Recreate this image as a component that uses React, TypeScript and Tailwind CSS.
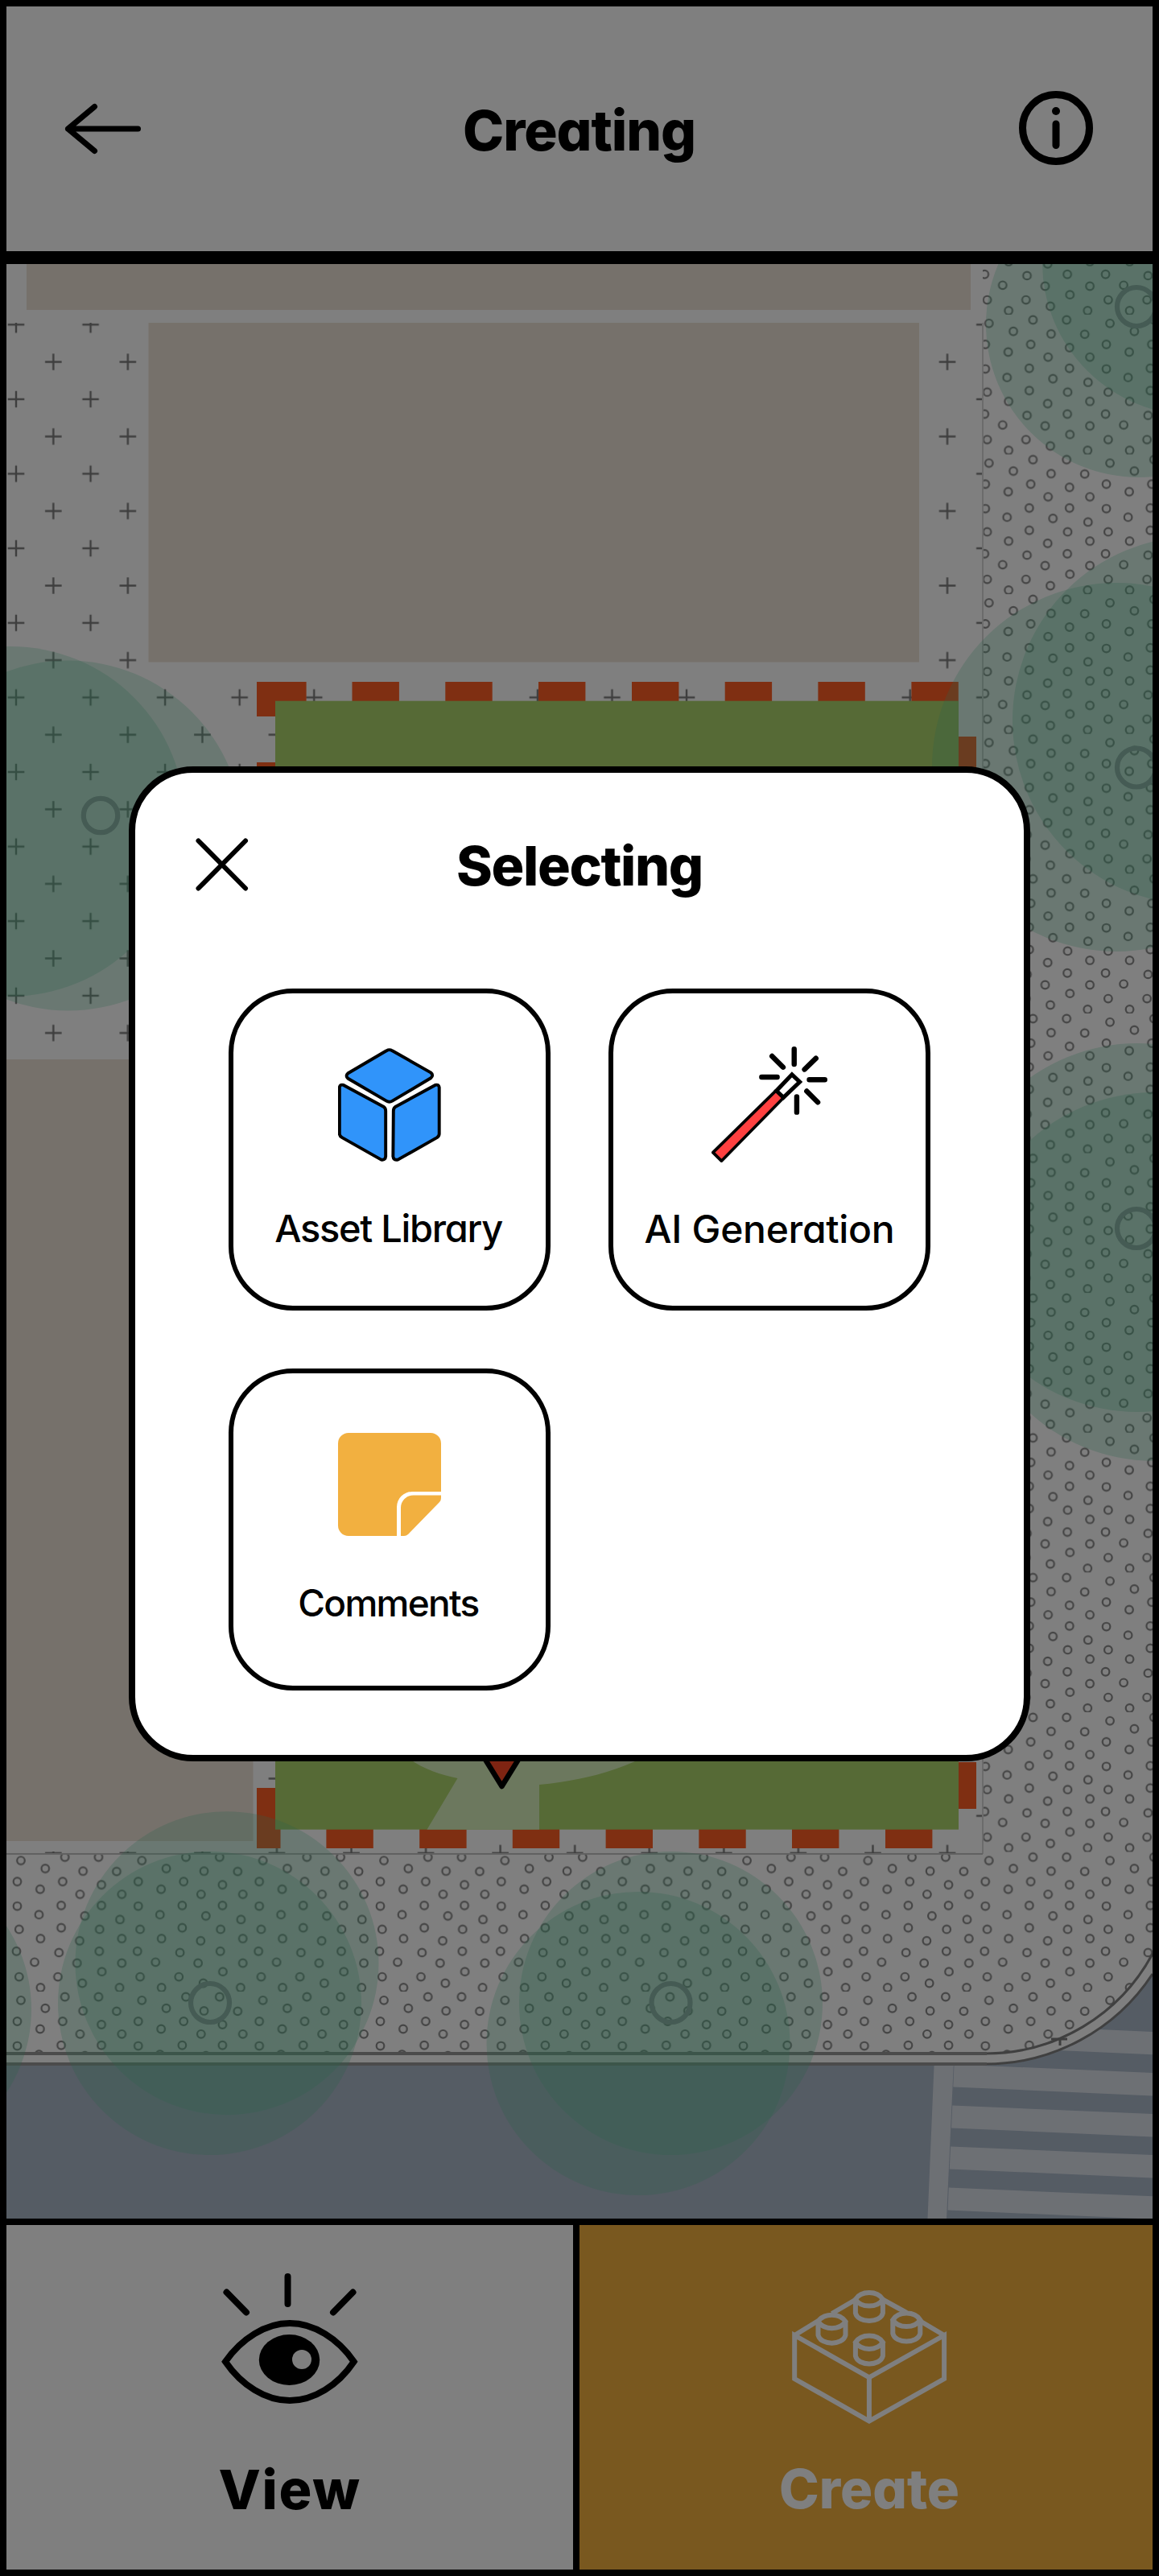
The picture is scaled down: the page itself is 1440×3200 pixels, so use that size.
import React from "react";

const PEBBLES: [number, number][] = [
  [68.7, 6.5], [110.5, 6.5], [14, 10.8], [44.3, 20.7], [91.2, 23.9], [133, 24.3],
  [9.5, 36.9], [65.9, 36.9], [114.1, 40.9], [37.9, 46.4], [87.5, 52.7], [139.4, 52.7],
  [9.5, 67.4], [64.1, 66.6], [114.1, 66.6], [36.5, 78], [93.5, 79.6], [137.1, 84],
  [11.8, 96.2], [64.1, 94.3], [111.8, 96.2], [38.4, 107.7], [139.4, 107.7], [87, 110.5],
  [8.5, 123.5], [61.3, 125.1], [111.4, 123.5], [31, 137], [83.8, 138.2], [139.4, 138.2],
  [11.8, 155.2], [60, 155.2], [114.6, 148.8], [90.3, 163.1], [38.4, 168.6], [136.6, 168.6],
];

const CANOPIES: [number, number, number][] = [
  [13, 1020.3, 217.3], [84.5, 1038, 217.5],
  [1415, 403, 190], [1485, 326, 190],
  [1387, 953, 229], [1487, 895, 229],
  [1413, 1525, 229], [1434, 1586, 229],
  [260.5, 2488.5, 188.5], [282, 2438.7, 188.5],
  [833.5, 2488.5, 188.5], [793, 2538.5, 188.5],
  [-149.5, 2496, 188.5],
];

const TRUNKS: [number, number, number][] = [
  [125, 1013, 21.2], [1412, 381, 24], [1412, 953.5, 24], [1412, 1526, 24], [261, 2488, 24], [833.5, 2488, 24],
];

const TOP_DASHES = [437.5, 553.3, 669, 785, 900.7, 1016.4, 1132.4];
const BOTTOM_DASHES = [405.4, 521.2, 636.8, 752.6, 868.3, 984, 1100];
const STRIPES = [2513.2, 2564.4, 2615.4, 2666.4, 2717.6];

const stripeLeft = (y: number) => 1185.5 - (y - 2565) * 0.044;

function SiteMap() {
  return (
    <svg className="block h-full w-full" viewBox="8 328 1424 2428" preserveAspectRatio="none" fill="none">
      <defs>
        <pattern id="plus" x="20" y="403.3" width="92.56" height="92.62" patternUnits="userSpaceOnUse">
          <path d="M36 46.3h20.6M46.3 36v20.6M0 0h10.3M0 0v10.3M82.3 0h10.3M92.56 0v10.3M0 92.62h10.3M0 82.3v10.3M82.3 92.62h10.3M92.56 82.3v10.3" stroke="#7d7d7d" strokeWidth="2.4" />
        </pattern>
        <pattern id="pebbles" x="463" y="2300.5" width="150.35" height="173.6" patternUnits="userSpaceOnUse">
          {PEBBLES.map(([x, y], i) => (
            <circle key={i} cx={x} cy={y} r="4.8" stroke="#888" strokeWidth="2.2" />
          ))}
        </pattern>
      </defs>

      <rect x="8" y="328" width="1424" height="2428" fill="#aab8c8" />
      <path d="M1160.8 2560H1185L1176 2756H1152.5Z" fill="#dbe0e9" />
      {STRIPES.map((y) => (
        <path key={y} d={`M${stripeLeft(y)} ${y}L1432 ${y + 10.7}V${y + 39}L${stripeLeft(y + 28)} ${y + 28}Z`} fill="#dbe0e9" />
      ))}

      <path d="M8 328H1432V2452A248 248 0 0 1 1225 2564H8Z" fill="#fff" />
      <path d="M1221 328H1432V2427A235 235 0 0 1 1225 2551H8V2303H1221Z" fill="url(#pebbles)" />
      <path d="M1432 2427A235 235 0 0 1 1225 2551M1432 2452A248 248 0 0 1 1225 2564" stroke="#808080" strokeWidth="3" />
      <path d="M8 2551H1226M8 2564H1226" stroke="#969696" strokeWidth="4" />
      <path d="M1306 2533H1326M1317 2534V2541" stroke="#7d7d7d" strokeWidth="3" />

      <rect x="8" y="401" width="1213" height="1902" fill="url(#plus)" />
      <path d="M1221 401V2303M8 2303H1221" stroke="#d6d6d6" strokeWidth="2" />
      <path d="M1221 2303H8" stroke="#bdbdbd" strokeWidth="1.5" />
      <path d="M184 388H1150V848H184ZM8 1300H318V2300H8Z" fill="#fff" />
      <path d="M33 328H1206V385H33ZM184.5 401H1142V822.5H184.5ZM8 1316H314.5V2287H8Z" fill="#ede3d7" />

      <path d="M319 847H380.6V890H319ZM319 2221H348.5V2296H319ZM1185 915H1213V973H1185ZM1185 2189H1213V2247H1185ZM319 947H345V1005H319Z" fill="#ff5e24" />
      {TOP_DASHES.map((x) => (
        <rect key={x} x={x} y="847" width="58.4" height="30" fill="#ff5e24" />
      ))}
      {BOTTOM_DASHES.map((x) => (
        <rect key={x} x={x} y="2266" width="58.4" height="30" fill="#ff5e24" />
      ))}
      <rect x="342" y="870.7" width="849" height="1402" fill="#acd46c" />
      <path d="M500 2178C520 2196 545 2204 568.5 2209L530.5 2272.7H670V2217C715 2213 755 2203 789 2188L800 2160Z" fill="#d9f0bd" />

      {CANOPIES.map(([x, y, r], i) => (
        <circle key={i} cx={x} cy={y} r={r} fill="#57c496" fillOpacity="0.256" />
      ))}
      {TRUNKS.map(([x, y, r]) => (
        <circle key={`${x}-${y}`} cx={x} cy={y} r={r} stroke="#8ab6a8" strokeWidth="6.2" />
      ))}
      <path d="M592 2168L623.5 2219L655 2168Z" fill="#ff4824" stroke="#000" strokeWidth="6.5" strokeLinejoin="round" />
    </svg>
  );
}

function BackIcon() {
  return (
    <svg className="h-16 w-[96px]" viewBox="0 0 96 64" fill="none" stroke="#000" strokeWidth="7" strokeLinecap="round" strokeLinejoin="round">
      <path d="M91.5 32H4.5M37.5 4.5L4.5 32L37.5 59.5" />
    </svg>
  );
}

function InfoIcon() {
  return (
    <svg className="-mt-[2px] h-[92px] w-[92px]" viewBox="0 0 92 92" fill="none" stroke="#000" strokeLinecap="round">
      <circle cx="46" cy="46" r="41.5" strokeWidth="9" />
      <path d="M46 41V67.5" strokeWidth="9" />
      <circle cx="46" cy="25" r="5" fill="#000" stroke="none" />
    </svg>
  );
}

function CloseIcon() {
  return (
    <svg className="h-[66px] w-[66px]" viewBox="0 0 66 66" fill="none" stroke="#000" strokeWidth="6" strokeLinecap="round">
      <path d="M3.5 3.5L62 62.5M62 3.5L3.5 62.5" />
    </svg>
  );
}

function CubeIcon() {
  return (
    <svg className="h-[141px] w-[128px]" viewBox="566 809 279 307" fill="#3094fa" stroke="#000" strokeWidth="8.5" strokeLinejoin="round">
      <path d="M697 816Q705 811 713 816L817 875Q826 882 817 890L713 952Q705 957 697 952L593 891Q585 884 593 877Z" />
      <path d="M570 915Q571 906 581 909L690 968Q695 972 695 979V1102Q694 1113 683 1111L577 1051Q570 1047 570 1041Z" />
      <path d="M840 915Q839 906 829 909L721 968Q716 972 716 979L715 1102Q716 1113 728 1111L834 1051Q840 1047 840 1041Z" />
    </svg>
  );
}

function WandIcon() {
  return (
    <svg className="h-[144px] w-[144px]" viewBox="357 805 314 314" fill="none" stroke="#000" strokeLinejoin="round">
      <path d="M532 924L552 944L384 1115L361 1092Z" fill="#ff4040" strokeWidth="8" />
      <path d="M575 881L596 901L552 943L533 925Z" fill="#fff" strokeWidth="11" strokeLinejoin="miter" />
      <path d="M581 812V853M521 831L551 861M640 837L609 867M493 888H535M622 895H664M615 926L645 956M588 941V983" strokeWidth="14" strokeLinecap="round" />
    </svg>
  );
}

function NoteIcon() {
  return (
    <svg className="h-32 w-32" viewBox="0 0 128 128" fill="#f2b040">
      <path d="M13 0H115A13 13 0 0 1 128 13V73H92A19 19 0 0 0 73 92V128H13A13 13 0 0 1 0 115V13A13 13 0 0 1 13 0Z" />
      <path d="M128 77.5V81Q128 84 126 86L87 126Q85 128 82 128H78V93A15.5 15.5 0 0 1 93.5 77.5Z" />
    </svg>
  );
}

function EyeIcon() {
  return (
    <svg className="h-[164px] w-[172px]" viewBox="274 2823 172 164" fill="none" stroke="#000" strokeWidth="8" strokeLinecap="round">
      <path d="M357.5 2828V2862M281.5 2847.5L306 2872.5M438.5 2847.5L414 2872.5" />
      <path d="M280 2933.7C300 2905 330 2886 360 2886S420 2905 439.7 2933.7C420 2963 390 2982 360 2982S300 2963 280 2933.7Z" />
      <ellipse cx="359.5" cy="2931.5" rx="37.7" ry="31.5" fill="#000" stroke="none" />
      <circle cx="375" cy="2931" r="12" fill="#fff" stroke="none" />
    </svg>
  );
}

const STUDS: [number, number][] = [[1080.4, 2856.3], [1034, 2883.9], [1126.8, 2881.8], [1080.4, 2909.7]];

function BrickIcon() {
  return (
    <svg className="h-[170px] w-[194px]" viewBox="983.5 2843 194 170" fill="none" stroke="#fff" strokeWidth="6">
      <path d="M987.7 2901L1080.4 2953.3L1173.6 2901V2955L1080.4 3007.5L987.7 2955ZM1080.4 2953.3V3007.5" />
      <path d="M987.7 2901L1017 2883M1034 2874L1063 2857M1098 2857L1127 2873M1145 2884L1173.6 2901" />
      {STUDS.map(([x, y]) => (
        <path key={`${x}-${y}`} transform={`translate(${x} ${y})`} d="M-17 0C-10-11 10-11 17 0C10 11-10 11-17 0ZM-17 0V17C-14 30 14 30 17 17V0" />
      ))}
    </svg>
  );
}

function OptionCard({ label, icon, labelClass }: { label: string; icon: React.ReactNode; labelClass: string }) {
  return (
    <button className="flex h-[400px] w-[400px] flex-col items-center rounded-[80px] border-6 border-black bg-white pt-[64px]">
      <span className="flex h-[148px] items-center justify-center">{icon}</span>
      <span className={labelClass}>{label}</span>
    </button>
  );
}

export default function App() {
  return (
    <div className="relative flex h-[3200px] w-[1440px] flex-col overflow-hidden border-8 border-black bg-white font-['Inter',sans-serif] text-black [font-feature-settings:'cv11','ss03']">
      <header className="flex h-[320px] shrink-0 items-center justify-between border-b-16 border-black pr-[74px] pl-[72px]">
        <BackIcon />
        <h1 className="-ml-[3px] pt-[4px] text-[69px] leading-none font-extrabold tracking-[-0.016em]">Creating</h1>
        <InfoIcon />
      </header>

      <main className="h-[2428px] shrink-0 overflow-hidden">
        <SiteMap />
      </main>

      <nav className="grid h-[436px] shrink-0 grid-cols-2 border-t-8 border-black">
        <div className="flex flex-col items-center border-r-8 border-black pt-[59px]">
          <EyeIcon />
          <span className="mt-[71px] text-[68px] leading-none font-extrabold tracking-[0.025em]">View</span>
        </div>
        <div className="flex flex-col items-center bg-[#f2b03f] pt-[79px] pl-[8px] text-white">
          <BrickIcon />
          <span className="mt-[45px] text-[67px] leading-none font-extrabold">Create</span>
        </div>
      </nav>

      <div className="absolute inset-0 flex items-start justify-center bg-black/50 pt-[944px]">
        <section className="flex h-[1236px] w-[1120px] flex-col rounded-[80px] border-8 border-black bg-white">
          <div className="grid h-[147px] grid-cols-[1fr_auto_1fr] items-center px-[75px] pt-[79px]">
            <CloseIcon />
            <h2 className="pt-[2px] text-[68px] leading-none font-extrabold tracking-[-0.02em]">Selecting</h2>
          </div>
          <div className="mt-[121px] grid grid-cols-[400px_400px] justify-center gap-[72px]">
            <OptionCard icon={<CubeIcon />} label="Asset Library" labelClass="mt-[56px] pr-[3px] text-[47px] leading-none font-medium tracking-[-1.3px] whitespace-nowrap" />
            <OptionCard icon={<WandIcon />} label="AI Generation" labelClass="mt-[57px] text-[48px] leading-none font-medium tracking-[-0.3px] whitespace-nowrap" />
            <OptionCard icon={<NoteIcon />} label="Comments" labelClass="mt-[50px] pr-[3px] text-[46px] leading-none font-medium tracking-[-1.7px] whitespace-nowrap" />
          </div>
        </section>
      </div>
    </div>
  );
}
